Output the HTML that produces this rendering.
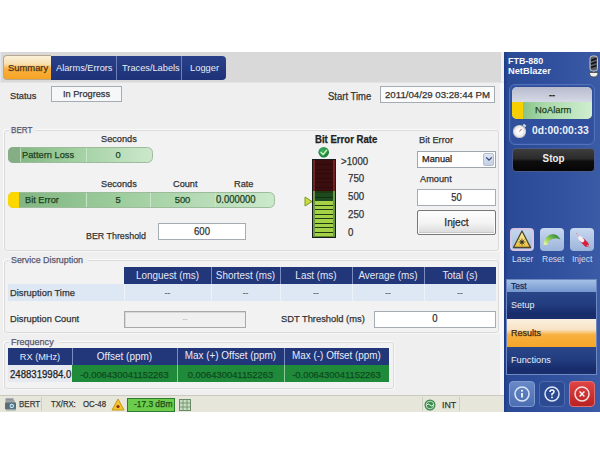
<!DOCTYPE html>
<html><head><meta charset="utf-8"><style>
html,body{margin:0;padding:0;}
body{width:600px;height:465px;position:relative;overflow:hidden;background:#fff;font-family:"Liberation Sans",sans-serif;}
.r{position:absolute;}
.t{position:absolute;white-space:nowrap;line-height:1;-webkit-text-stroke:0.25px currentColor;}
.t.l{-webkit-text-stroke:0;}
</style></head><body>
<div class="r" style="left:0px;top:52px;width:501px;height:31px;background:#d9d9d9;"></div>
<div class="r" style="left:501px;top:52px;width:3px;height:31px;background:#f0f0f0;"></div>
<div class="r" style="left:0px;top:52px;width:1px;height:31px;background:#e4e6ec;"></div>
<div class="r" style="left:0px;top:82px;width:504px;height:314px;background:#efefef;"></div>
<div class="r" style="left:0px;top:82px;width:504px;height:1px;background:#e4e4e4;"></div>
<div class="r" style="left:500px;top:83px;width:4px;height:313px;background:#f8f8f8;"></div>
<div class="r" style="left:0px;top:395px;width:504px;height:17px;background:#e7e6da;border-top:1px solid #c9c9c0;box-sizing:border-box;"></div>
<div class="r" style="left:3px;top:55px;width:48px;height:25px;background:linear-gradient(#fbf0d8 0%,#f8e0b0 35%,#f8b040 55%,#f6a421 100%);border:1px solid #b8a890;border-right:none;border-radius:4px 0 0 4px;box-sizing:border-box;"></div>
<div class="r" style="left:51px;top:56px;width:175px;height:24px;background:linear-gradient(#2a4088,#1d3278);border-radius:0 4px 4px 0;"></div>
<div class="r" style="left:116px;top:56px;width:1px;height:24px;background:#6c80b8;"></div>
<div class="r" style="left:181px;top:56px;width:1px;height:24px;background:#6c80b8;"></div>
<div class="t" style="left:8.00px;top:63.17px;font-size:9.964px;color:#4a3418;transform:scaleX(0.9434);transform-origin:0 0;">Summary</div>
<div class="t l" style="left:56.00px;top:62.60px;font-size:9.805px;color:#e8ecf6;transform:scaleX(0.9434);transform-origin:0 0;">Alarms/Errors</div>
<div class="t l" style="left:121.50px;top:62.60px;font-size:9.805px;color:#e8ecf6;transform:scaleX(0.9434);transform-origin:0 0;">Traces/Labels</div>
<div class="t l" style="left:190.00px;top:63.21px;font-size:9.911px;color:#e8ecf6;transform:scaleX(0.9434);transform-origin:0 0;">Logger</div>
<div class="t" style="left:9.50px;top:91.36px;font-size:9.858px;color:#333;transform:scaleX(0.9434);transform-origin:0 0;">Status</div>
<div class="r" style="left:51px;top:86px;width:71px;height:16px;background:#f6f7f9;border:1px solid #a6acb4;box-sizing:border-box;"></div>
<div class="t" style="left:51.00px;top:89.04px;font-size:9.752px;color:#333;width:75.26px;text-align:center;transform:scaleX(0.9434);transform-origin:0 0;">In Progress</div>
<div class="t" style="left:327.60px;top:91.98px;font-size:10.070px;color:#333;transform:scaleX(0.9434);transform-origin:0 0;">Start Time</div>
<div class="r" style="left:380px;top:86px;width:115px;height:17px;background:#fbfbfb;border:1px solid #a6acb4;box-sizing:border-box;"></div>
<div class="t" style="left:384.80px;top:89.96px;font-size:9.858px;color:#333;transform:scaleX(0.9811);transform-origin:0 0;">2011/04/29 03:28:44 PM</div>
<div class="r" style="left:4px;top:130px;width:495px;height:121px;border:1px solid #dadada;border-radius:3px;box-sizing:border-box;background:#f2f2f2;box-shadow:-1px -1px 0 #fbfbfb, 1px 1px 0 #f8f8f8;"></div>
<div class="r" style="left:9px;top:128px;width:27px;height:5px;background:#efefef;"></div>
<div class="r" style="left:4px;top:260px;width:495px;height:73px;border:1px solid #dadada;border-radius:3px;box-sizing:border-box;background:#f2f2f2;box-shadow:-1px -1px 0 #fbfbfb, 1px 1px 0 #f8f8f8;"></div>
<div class="r" style="left:9px;top:258px;width:79px;height:5px;background:#efefef;"></div>
<div class="r" style="left:4px;top:342px;width:390px;height:47px;border:1px solid #dadada;border-radius:3px;box-sizing:border-box;background:#f2f2f2;box-shadow:-1px -1px 0 #fbfbfb, 1px 1px 0 #f8f8f8;"></div>
<div class="r" style="left:9px;top:340px;width:50px;height:5px;background:#efefef;"></div>
<div class="t" style="left:11.00px;top:124.96px;font-size:9.858px;color:#56566e;transform:scaleX(0.8208);transform-origin:0 0;">BERT</div>
<div class="t" style="left:11.00px;top:255.36px;font-size:9.858px;color:#56566e;transform:scaleX(0.9019);transform-origin:0 0;">Service Disruption</div>
<div class="t" style="left:11.00px;top:336.56px;font-size:9.858px;color:#56566e;transform:scaleX(0.9170);transform-origin:0 0;">Frequency</div>
<div class="r" style="left:8px;top:147px;width:145px;height:16px;background:linear-gradient(90deg,#7fb37f 0%,#9ccc9c 40%,#cce8cc 100%);border:1px solid #9cbc9c;border-radius:5px 5.5px 5.5px 5px;box-sizing:border-box;overflow:hidden;"></div>
<div class="r" style="left:8px;top:147px;width:12px;height:16px;background:#86ae86;border-radius:5px 0 0 5px;"></div>
<div class="r" style="left:20px;top:148px;width:1px;height:14px;background:#b8d8b8;"></div>
<div class="r" style="left:86px;top:148px;width:1px;height:14px;background:#c8e6c8;"></div>
<div class="t" style="left:21.50px;top:149.56px;font-size:9.858px;color:#1c421c;transform:scaleX(0.9434);transform-origin:0 0;">Pattern Loss</div>
<div class="t" style="left:86.00px;top:150.07px;font-size:9.964px;color:#1c421c;width:67.84px;text-align:center;transform:scaleX(0.9434);transform-origin:0 0;">0</div>
<div class="t" style="left:101.00px;top:134.04px;font-size:9.752px;color:#333;transform:scaleX(0.9434);transform-origin:0 0;">Seconds</div>
<div class="r" style="left:8px;top:192px;width:267px;height:16px;background:linear-gradient(90deg,#7fb37f 0%,#9ccc9c 40%,#cce8cc 100%);border:1px solid #9cbc9c;border-radius:5px 5.5px 5.5px 5px;box-sizing:border-box;overflow:hidden;"></div>
<div class="r" style="left:8px;top:192px;width:11px;height:16px;background:#fcd800;border-radius:5px 0 0 5px;"></div>
<div class="r" style="left:86px;top:193px;width:1px;height:14px;background:#c8e6c8;"></div>
<div class="r" style="left:150px;top:193px;width:1px;height:14px;background:#c8e6c8;"></div>
<div class="r" style="left:215px;top:193px;width:1px;height:14px;background:#c8e6c8;"></div>
<div class="t" style="left:25.00px;top:194.70px;font-size:9.805px;color:#1c421c;transform:scaleX(0.9434);transform-origin:0 0;">Bit Error</div>
<div class="t" style="left:86.00px;top:194.97px;font-size:9.964px;color:#1c421c;width:67.84px;text-align:center;transform:scaleX(0.9434);transform-origin:0 0;">5</div>
<div class="t" style="left:150.00px;top:194.97px;font-size:9.964px;color:#1c421c;width:68.90px;text-align:center;transform:scaleX(0.9434);transform-origin:0 0;">500</div>
<div class="t" style="left:216.20px;top:194.88px;font-size:10.070px;color:#1c421c;transform:scaleX(0.9434);transform-origin:0 0;">0.000000</div>
<div class="t" style="left:101.00px;top:179.04px;font-size:9.752px;color:#333;transform:scaleX(0.9434);transform-origin:0 0;">Seconds</div>
<div class="t" style="left:173.20px;top:179.04px;font-size:9.752px;color:#333;transform:scaleX(0.9434);transform-origin:0 0;">Count</div>
<div class="t" style="left:234.30px;top:179.04px;font-size:9.752px;color:#333;transform:scaleX(0.9434);transform-origin:0 0;">Rate</div>
<div class="t" style="left:85.80px;top:230.86px;font-size:9.858px;color:#333;transform:scaleX(0.9009);transform-origin:0 0;">BER Threshold</div>
<div class="r" style="left:158px;top:223px;width:88px;height:17px;background:#fff;border:1px solid #a6acb4;box-sizing:border-box;"></div>
<div class="t" style="left:158.00px;top:226.89px;font-size:10.176px;color:#333;width:93.28px;text-align:center;transform:scaleX(0.9434);transform-origin:0 0;">600</div>
<div class="t" style="left:315.00px;top:135.39px;font-size:10.176px;color:#222;font-weight:bold;transform:scaleX(0.9434);transform-origin:0 0;">Bit Error Rate</div>
<svg class="r" style="left:317px;top:146px" width="14" height="13" viewBox="0 0 14 13"><defs><radialGradient id="cg" cx="0.4" cy="0.35" r="0.7"><stop offset="0" stop-color="#3cb060"/><stop offset="1" stop-color="#1a7a38"/></radialGradient></defs><circle cx="6.7" cy="6.2" r="5.3" fill="url(#cg)"/><path d="M4 6.4 L6.1 8.6 L9.6 4.2" fill="none" stroke="#c8f4b8" stroke-width="1.5" stroke-linecap="round" stroke-linejoin="round"/></svg>
<div class="r" style="left:312px;top:159px;width:24px;height:79px;background:#2a1010;border:1px solid #1a1a1a;box-sizing:border-box;"></div>
<div class="r" style="left:313px;top:160px;width:22px;height:31px;background:#3a0e0e;border-left:2px solid #742222;border-right:2px solid #742222;box-sizing:border-box;"></div>
<div class="r" style="left:313px;top:191px;width:22px;height:46px;background:#1e3a10;border-left:2px solid #6a9a48;border-right:2px solid #6a9a48;border-bottom:1px solid #5a8a30;box-sizing:border-box;"></div>
<div class="r" style="left:315px;top:164.0px;width:18px;height:0.6px;background:#300a0a;"></div>
<div class="r" style="left:315px;top:168.5px;width:18px;height:0.6px;background:#300a0a;"></div>
<div class="r" style="left:315px;top:173.0px;width:18px;height:0.6px;background:#300a0a;"></div>
<div class="r" style="left:315px;top:177.5px;width:18px;height:0.6px;background:#300a0a;"></div>
<div class="r" style="left:315px;top:182.0px;width:18px;height:0.6px;background:#300a0a;"></div>
<div class="r" style="left:315px;top:186.5px;width:18px;height:0.6px;background:#300a0a;"></div>
<div class="r" style="left:315px;top:193px;width:18px;height:8px;background:#1c4a1c;"></div>
<div class="r" style="left:315px;top:197px;width:18px;height:0.8px;background:#123012;"></div>
<div class="r" style="left:315px;top:201.4px;width:18px;height:3.5px;background:#a6d046;"></div>
<div class="r" style="left:315px;top:205.9px;width:18px;height:3.5px;background:#a6d046;"></div>
<div class="r" style="left:315px;top:210.4px;width:18px;height:3.5px;background:#a6d046;"></div>
<div class="r" style="left:315px;top:214.9px;width:18px;height:3.5px;background:#a6d046;"></div>
<div class="r" style="left:315px;top:219.4px;width:18px;height:3.5px;background:#a6d046;"></div>
<div class="r" style="left:315px;top:223.9px;width:18px;height:3.5px;background:#a6d046;"></div>
<div class="r" style="left:315px;top:228.4px;width:18px;height:3.5px;background:#a6d046;"></div>
<div class="r" style="left:315px;top:232.9px;width:18px;height:3.5px;background:#a6d046;"></div>
<svg class="r" style="left:304px;top:196px" width="9" height="11" viewBox="0 0 9 11"><path d="M1 1 L8 5.5 L1 10 Z" fill="#c8dc40" stroke="#7a9a20" stroke-width="1"/></svg>
<div class="t" style="left:341.00px;top:156.50px;font-size:10.282px;color:#333;transform:scaleX(0.9434);transform-origin:0 0;">&gt;1000</div>
<div class="t" style="left:347.80px;top:174.30px;font-size:10.282px;color:#333;transform:scaleX(0.9434);transform-origin:0 0;">750</div>
<div class="t" style="left:347.80px;top:192.30px;font-size:10.282px;color:#333;transform:scaleX(0.9434);transform-origin:0 0;">500</div>
<div class="t" style="left:347.80px;top:210.20px;font-size:10.282px;color:#333;transform:scaleX(0.9434);transform-origin:0 0;">250</div>
<div class="t" style="left:347.80px;top:228.00px;font-size:10.282px;color:#333;transform:scaleX(0.9434);transform-origin:0 0;">0</div>
<div class="t" style="left:419.40px;top:134.56px;font-size:9.858px;color:#333;transform:scaleX(0.9434);transform-origin:0 0;">Bit Error</div>
<div class="r" style="left:417px;top:151px;width:79px;height:17px;background:#fff;border:1px solid #a0a6b0;box-sizing:border-box;"></div>
<div class="r" style="left:483px;top:153px;width:11px;height:13px;background:linear-gradient(#dfe6f2,#c4d0e6);border:1px solid #b4bed2;border-radius:2px;box-sizing:border-box;"></div>
<svg class="r" style="left:485px;top:156px" width="8" height="6" viewBox="0 0 8 6"><path d="M1.2 1.4 L4 4.2 L6.8 1.4" fill="none" stroke="#34487e" stroke-width="1.3"/></svg>
<div class="t" style="left:421.60px;top:154.14px;font-size:9.752px;color:#222;transform:scaleX(0.9434);transform-origin:0 0;">Manual</div>
<div class="t" style="left:419.50px;top:173.74px;font-size:9.752px;color:#333;transform:scaleX(0.9434);transform-origin:0 0;">Amount</div>
<div class="r" style="left:417px;top:189px;width:79px;height:17px;background:#fff;border:1px solid #a6acb4;box-sizing:border-box;"></div>
<div class="t" style="left:417.00px;top:193.38px;font-size:10.070px;color:#333;width:83.74px;text-align:center;transform:scaleX(0.9434);transform-origin:0 0;">50</div>
<div class="r" style="left:417px;top:210px;width:79px;height:25px;background:linear-gradient(#fdfdfd 0%,#f4f4f4 50%,#d8d8d8 100%);border:1px solid #787878;border-radius:2px;box-sizing:border-box;box-shadow:inset 0 0 0 1px #fafafa, inset 0 -1px 0 1px #c8c8c8;"></div>
<div class="t" style="left:417.00px;top:216.95px;font-size:10.812px;color:#2a2a2a;width:83.74px;text-align:center;transform:scaleX(0.9434);transform-origin:0 0;">Inject</div>
<div class="r" style="left:124px;top:267px;width:372px;height:17px;background:#22367a;"></div>
<div class="r" style="left:211px;top:267px;width:1px;height:17px;background:#7a8cc0;"></div>
<div class="r" style="left:280px;top:267px;width:1px;height:17px;background:#7a8cc0;"></div>
<div class="r" style="left:352px;top:267px;width:1px;height:17px;background:#7a8cc0;"></div>
<div class="r" style="left:424px;top:267px;width:1px;height:17px;background:#7a8cc0;"></div>
<div class="r" style="left:8px;top:284px;width:488px;height:17px;background:#dde8f4;"></div>
<div class="r" style="left:124px;top:284px;width:1px;height:17px;background:#eef3fa;"></div>
<div class="r" style="left:211px;top:284px;width:1px;height:17px;background:#eef3fa;"></div>
<div class="r" style="left:280px;top:284px;width:1px;height:17px;background:#eef3fa;"></div>
<div class="r" style="left:352px;top:284px;width:1px;height:17px;background:#eef3fa;"></div>
<div class="r" style="left:424px;top:284px;width:1px;height:17px;background:#eef3fa;"></div>
<div class="t l" style="left:124.00px;top:271.42px;font-size:10.494px;color:#e4e8f4;width:92.22px;text-align:center;transform:scaleX(0.9434);transform-origin:0 0;">Longuest (ms)</div>
<div class="t" style="left:124.00px;top:288.52px;font-size:8.480px;color:#666;width:92.22px;text-align:center;transform:scaleX(0.9434);transform-origin:0 0;">--</div>
<div class="t l" style="left:211.00px;top:271.42px;font-size:10.494px;color:#e4e8f4;width:73.14px;text-align:center;transform:scaleX(0.9434);transform-origin:0 0;">Shortest (ms)</div>
<div class="t" style="left:211.00px;top:288.52px;font-size:8.480px;color:#666;width:73.14px;text-align:center;transform:scaleX(0.9434);transform-origin:0 0;">--</div>
<div class="t l" style="left:280.00px;top:271.42px;font-size:10.494px;color:#e4e8f4;width:76.32px;text-align:center;transform:scaleX(0.9434);transform-origin:0 0;">Last (ms)</div>
<div class="t" style="left:280.00px;top:288.52px;font-size:8.480px;color:#666;width:76.32px;text-align:center;transform:scaleX(0.9434);transform-origin:0 0;">--</div>
<div class="t l" style="left:352.00px;top:271.42px;font-size:10.494px;color:#e4e8f4;width:76.32px;text-align:center;transform:scaleX(0.9434);transform-origin:0 0;">Average (ms)</div>
<div class="t" style="left:352.00px;top:288.52px;font-size:8.480px;color:#666;width:76.32px;text-align:center;transform:scaleX(0.9434);transform-origin:0 0;">--</div>
<div class="t l" style="left:424.00px;top:271.42px;font-size:10.494px;color:#e4e8f4;width:76.32px;text-align:center;transform:scaleX(0.9434);transform-origin:0 0;">Total (s)</div>
<div class="t" style="left:424.00px;top:288.52px;font-size:8.480px;color:#666;width:76.32px;text-align:center;transform:scaleX(0.9434);transform-origin:0 0;">--</div>
<div class="t" style="left:9.60px;top:288.21px;font-size:9.911px;color:#333;transform:scaleX(0.9434);transform-origin:0 0;">Disruption Time</div>
<div class="t" style="left:9.60px;top:314.16px;font-size:9.858px;color:#333;transform:scaleX(0.9434);transform-origin:0 0;">Disruption Count</div>
<div class="r" style="left:124px;top:311px;width:122px;height:17px;background:#f0f0f0;border:1px solid #a8a8a8;box-sizing:border-box;box-shadow:inset 1px 1px 0 #d8d8d8;"></div>
<div class="t l" style="left:124.00px;top:314.57px;font-size:7.950px;color:#aaa;width:129.32px;text-align:center;transform:scaleX(0.9434);transform-origin:0 0;">--</div>
<div class="t" style="left:281.30px;top:314.11px;font-size:9.911px;color:#333;transform:scaleX(0.9434);transform-origin:0 0;">SDT Threshold (ms)</div>
<div class="r" style="left:374px;top:311px;width:122px;height:17px;background:#fff;border:1px solid #a6acb4;box-sizing:border-box;"></div>
<div class="t" style="left:374.00px;top:313.98px;font-size:10.070px;color:#333;width:129.32px;text-align:center;transform:scaleX(0.9434);transform-origin:0 0;">0</div>
<div class="r" style="left:8px;top:348px;width:381px;height:17px;background:#22367a;"></div>
<div class="r" style="left:72px;top:348px;width:1px;height:17px;background:#7a8cc0;"></div>
<div class="r" style="left:177px;top:348px;width:1px;height:17px;background:#7a8cc0;"></div>
<div class="r" style="left:284px;top:348px;width:1px;height:17px;background:#7a8cc0;"></div>
<div class="r" style="left:8px;top:365px;width:64px;height:17px;background:#e6eaf0;"></div>
<div class="r" style="left:72px;top:365px;width:317px;height:17px;background:#1f8a3a;"></div>
<div class="r" style="left:177px;top:365px;width:1px;height:17px;background:#8cc89c;"></div>
<div class="r" style="left:284px;top:365px;width:1px;height:17px;background:#8cc89c;"></div>
<div class="t l" style="left:8.00px;top:351.74px;font-size:9.752px;color:#e8ecf6;width:67.84px;text-align:center;transform:scaleX(0.9434);transform-origin:0 0;">RX (MHz)</div>
<div class="t l" style="left:72.00px;top:351.03px;font-size:10.600px;color:#e8ecf6;width:111.30px;text-align:center;transform:scaleX(0.9434);transform-origin:0 0;">Offset (ppm)</div>
<div class="t l" style="left:177.00px;top:351.12px;font-size:10.494px;color:#e8ecf6;width:113.42px;text-align:center;transform:scaleX(0.9434);transform-origin:0 0;">Max (+) Offset (ppm)</div>
<div class="t l" style="left:284.00px;top:351.12px;font-size:10.494px;color:#e8ecf6;width:111.30px;text-align:center;transform:scaleX(0.9434);transform-origin:0 0;">Max (-) Offset (ppm)</div>
<div class="t" style="left:10.20px;top:369.69px;font-size:10.176px;color:#222;transform:scaleX(0.9434);transform-origin:0 0;">2488319984.0</div>
<div class="t" style="left:72.00px;top:369.87px;font-size:9.964px;color:#0e4a1e;width:111.30px;text-align:center;transform:scaleX(0.9434);transform-origin:0 0;">-0.006430041152263</div>
<div class="t" style="left:177.00px;top:369.87px;font-size:9.964px;color:#0e4a1e;width:113.42px;text-align:center;transform:scaleX(0.9434);transform-origin:0 0;">0.006430041152263</div>
<div class="t" style="left:284.00px;top:369.87px;font-size:9.964px;color:#0e4a1e;width:111.30px;text-align:center;transform:scaleX(0.9434);transform-origin:0 0;">-0.006430041152263</div>
<svg class="r" style="left:4px;top:398px" width="14" height="13" viewBox="0 0 14 13"><rect x="1.5" y="0.5" width="8" height="1.2" fill="#6a7480"/><rect x="1.5" y="2.4" width="9" height="1.2" fill="#6a7480"/><rect x="1" y="4.2" width="11" height="7.3" rx="1" fill="#5e6c78"/><circle cx="7.8" cy="7.9" r="2.7" fill="#d8ecf4" stroke="#3a5a6a" stroke-width="0.8"/><circle cx="7.8" cy="7.9" r="1.2" fill="#4a90b0"/><rect x="2" y="11.5" width="10" height="1" fill="#8fa8a0"/></svg>
<div class="t" style="left:18.80px;top:398.96px;font-size:9.858px;color:#3a3a3a;transform:scaleX(0.8113);transform-origin:0 0;">BERT</div>
<div class="r" style="left:41px;top:397px;width:1px;height:14px;background:#cfcec2;"></div>
<div class="t" style="left:50.60px;top:398.96px;font-size:9.858px;color:#333;transform:scaleX(0.7783);transform-origin:0 0;">TX/RX:</div>
<div class="t" style="left:83.40px;top:398.96px;font-size:9.858px;color:#333;transform:scaleX(0.7925);transform-origin:0 0;">OC-48</div>
<svg class="r" style="left:111px;top:398px" width="14" height="13" viewBox="0 0 14 13"><path d="M7 1 L13 12 L1 12 Z" fill="#f4c430" stroke="#c89a10" stroke-width="1"/><circle cx="7" cy="8.5" r="1.6" fill="#8a2a10"/></svg>
<div class="r" style="left:127px;top:398px;width:48px;height:14px;background:#6ccc4c;border:1px solid #2e7a2e;box-sizing:border-box;"></div>
<div class="t" style="left:134.20px;top:399.36px;font-size:9.858px;color:#1a4a1a;transform:scaleX(0.8491);transform-origin:0 0;">-17.3 dBm</div>
<svg class="r" style="left:179px;top:399px" width="12" height="12" viewBox="0 0 12 12"><rect x="0.5" y="0.5" width="11" height="11" fill="#c8dcc0" stroke="#6a8a6a"/><path d="M4 0.5V11.5M8 0.5V11.5M0.5 4H11.5M0.5 8H11.5" stroke="#6a8a6a" stroke-width="0.8"/></svg>
<div class="r" style="left:422px;top:397px;width:1px;height:14px;background:#cfcec2;"></div>
<div class="r" style="left:459px;top:397px;width:1px;height:14px;background:#cfcec2;"></div>
<svg class="r" style="left:424px;top:399px" width="12" height="12" viewBox="0 0 12 12"><circle cx="6" cy="6" r="5.5" fill="#3a8a4a"/><circle cx="6" cy="6" r="3.8" fill="none" stroke="#cfe8d0" stroke-width="0.9"/><path d="M2.5 6.5 Q4 3.5 6 6 T9.5 5.5" fill="none" stroke="#fff" stroke-width="0.9"/></svg>
<div class="t" style="left:442.00px;top:399.56px;font-size:9.858px;color:#333;transform:scaleX(0.8962);transform-origin:0 0;">INT</div>
<div class="r" style="left:504px;top:52px;width:96px;height:360px;background:linear-gradient(90deg,#1d3a86 0%,#2a4a96 4%,#3252a0 60%,#3b5ba6 100%);"></div>
<div class="t l" style="left:507.50px;top:56.47px;font-size:9.487px;color:#f4f6fa;font-weight:bold;transform:scaleX(0.9434);transform-origin:0 0;">FTB-880</div>
<div class="t l" style="left:507.50px;top:65.66px;font-size:9.858px;color:#f4f6fa;font-weight:bold;transform:scaleX(0.9434);transform-origin:0 0;">NetBlazer</div>
<svg class="r" style="left:588px;top:55px" width="11" height="23" viewBox="0 0 11 23"><rect x="2" y="1" width="7.5" height="15" rx="2.5" fill="#5a5e66" stroke="#c4c8d0" stroke-width="1"/><path d="M3 5.5 L8.5 3.5 M3 9 L8.5 7 M3 12.5 L8.5 10.5" stroke="#111" stroke-width="1.6"/><path d="M3.5 16.5 L5.5 18 M8 16.5 L6 18" stroke="#333" stroke-width="0.8"/><path d="M1.5 17.5 H10 Q10 22 5.75 22 Q1.5 22 1.5 17.5 Z" fill="#eef0ec" stroke="#444" stroke-width="0.8"/></svg>
<div class="r" style="left:509px;top:84px;width:86px;height:61px;background:#30509e;border:1px solid #5272bc;border-radius:6px;box-sizing:border-box;box-shadow:inset 0 0 2px #4466b0;"></div>
<div class="r" style="left:512px;top:87px;width:80px;height:32px;border-radius:5px;overflow:hidden;background:#ccc;"></div>
<div class="r" style="left:512px;top:87px;width:80px;height:15px;background:linear-gradient(#b6bacc,#d6dae6);border-radius:5px 5px 0 0;"></div>
<div class="r" style="left:512px;top:102px;width:80px;height:17px;background:linear-gradient(90deg,#78b878 0%,#a8d8a8 40%,#d0eed0 100%);border-radius:0 0 5px 5px;"></div>
<div class="r" style="left:512px;top:102px;width:11px;height:17px;background:#f8d000;border-radius:0 0 0 5px;"></div>
<div class="t" style="left:512.00px;top:89.62px;font-size:9.540px;color:#2a2a2a;font-weight:bold;width:84.80px;text-align:center;transform:scaleX(0.9434);transform-origin:0 0;">--</div>
<div class="t" style="left:534.50px;top:105.11px;font-size:9.911px;color:#1c421c;transform:scaleX(0.9434);transform-origin:0 0;">NoAlarm</div>
<svg class="r" style="left:512px;top:123px" width="16" height="16" viewBox="0 0 16 16"><circle cx="7.5" cy="8.5" r="6" fill="#f2f2f2" stroke="#c8c8c8" stroke-width="1.2"/><circle cx="7.5" cy="8.5" r="4" fill="#fff" stroke="#ddd" stroke-width="0.6"/><path d="M7.5 8.5 L9.5 6" stroke="#c04040" stroke-width="0.9"/><rect x="11" y="1.5" width="3" height="2" fill="#ddd" transform="rotate(40 12.5 2.5)"/></svg>
<div class="t l" style="left:531.50px;top:125.46px;font-size:10.918px;color:#eef2fa;font-weight:bold;transform:scaleX(0.9434);transform-origin:0 0;">0d:00:00:33</div>
<div class="r" style="left:512px;top:148px;width:83px;height:24px;background:linear-gradient(#3e3e3e 0%,#2a2a2a 45%,#0e0e0e 55%,#050505 100%);border:1px solid #4a5a8a;border-radius:4px;box-sizing:border-box;"></div>
<div class="t l" style="left:511.50px;top:154.21px;font-size:10.388px;color:#f0f0f0;font-weight:bold;width:87.98px;text-align:center;transform:scaleX(0.9434);transform-origin:0 0;">Stop</div>
<div class="r" style="left:510px;top:228px;width:24px;height:23px;background:linear-gradient(#c4d6ee,#a8bedc);border:2px solid #d6c6e6;border-radius:4px;box-sizing:border-box;"></div>
<div class="r" style="left:540px;top:228px;width:24px;height:23px;background:linear-gradient(#c8d8f0,#9cb4da);border-radius:4px;"></div>
<div class="r" style="left:570px;top:228px;width:24px;height:23px;background:linear-gradient(#c8d8f0,#9cb4da);border-radius:4px;"></div>
<svg class="r" style="left:510px;top:228px" width="24" height="24" viewBox="0 0 24 24"><defs><linearGradient id="ly" x1="0" y1="0" x2="0" y2="1"><stop offset="0" stop-color="#faf2b8"/><stop offset="0.6" stop-color="#f4d860"/><stop offset="1" stop-color="#eeb838"/></linearGradient></defs><path d="M12 3 L20.5 19.5 L3.5 19.5 Z" fill="url(#ly)" stroke="#4a4630" stroke-width="1.3" stroke-linejoin="round"/><circle cx="12" cy="14" r="1.6" fill="#222"/><path d="M12 10.5V17.5M8.5 14H15.5M9.6 11.6L14.4 16.4M14.4 11.6L9.6 16.4" stroke="#333" stroke-width="0.7"/></svg>
<svg class="r" style="left:540px;top:228px" width="24" height="24" viewBox="0 0 24 24"><defs><linearGradient id="lg" x1="0.1" y1="0.9" x2="0.9" y2="0.2"><stop offset="0" stop-color="#e0f49c"/><stop offset="0.45" stop-color="#8cc850"/><stop offset="1" stop-color="#2e8a3c"/></linearGradient></defs><path d="M3.5 16.8 C3.8 10, 8.5 5.8, 13.5 6.2 C17 6.5, 19.2 8.8, 20.5 11.6 C18.5 10.6, 15.5 9.8, 12.5 11 C9.5 12.2, 7.8 14.2, 7.2 17 Z" fill="url(#lg)"/></svg>
<svg class="r" style="left:570px;top:228px" width="24" height="24" viewBox="0 0 24 24"><path d="M5 4 L10.5 9.5" stroke="#d8c8d8" stroke-width="2" stroke-dasharray="1.6 1"/><path d="M6 5 L9.5 8.5" stroke="#a06070" stroke-width="0.7" stroke-dasharray="1 1.5"/><path d="M12.5 12.5 L16.5 16.5" stroke="#d42040" stroke-width="4.6" stroke-linecap="round"/><path d="M10 10 L12.3 12.3" stroke="#f4eef4" stroke-width="4" stroke-linecap="round"/><path d="M17 17 L19.5 19.5" stroke="#b890a8" stroke-width="1.2"/></svg>
<div class="t l" style="left:512.20px;top:254.57px;font-size:9.010px;color:#d4dcea;transform:scaleX(0.9434);transform-origin:0 0;">Laser</div>
<div class="t l" style="left:541.50px;top:254.57px;font-size:9.010px;color:#d4dcea;transform:scaleX(0.9434);transform-origin:0 0;">Reset</div>
<div class="t l" style="left:571.70px;top:254.57px;font-size:9.010px;color:#d4dcea;transform:scaleX(0.9434);transform-origin:0 0;">Inject</div>
<div class="r" style="left:506px;top:279px;width:91px;height:96px;border:1px solid #7088c0;box-sizing:border-box;background:#1e3676;"></div>
<div class="r" style="left:507px;top:280px;width:89px;height:12px;background:linear-gradient(#a4c0e6,#7498ce);"></div>
<div class="t" style="left:511.00px;top:281.67px;font-size:9.010px;color:#1a2a5a;transform:scaleX(0.9434);transform-origin:0 0;">Test</div>
<div class="r" style="left:507px;top:292px;width:89px;height:27px;background:linear-gradient(#2a4688 0%,#223e80 45%,#182c6c 80%,#1a2e6e 100%);"></div>
<div class="t l" style="left:511.00px;top:300.17px;font-size:9.487px;color:#e8ecf6;transform:scaleX(0.9434);transform-origin:0 0;">Setup</div>
<div class="r" style="left:507px;top:319px;width:89px;height:28px;background:linear-gradient(#fbf0e0 0%,#f8e2c4 38%,#f8b040 56%,#f6a628 100%);"></div>
<div class="t" style="left:511.00px;top:328.22px;font-size:9.540px;color:#3e2a0e;transform:scaleX(0.9434);transform-origin:0 0;">Results</div>
<div class="r" style="left:507px;top:347px;width:89px;height:27px;background:linear-gradient(#2a4688 0%,#223e80 45%,#182c6c 80%,#1a2e6e 100%);"></div>
<div class="t l" style="left:511.00px;top:355.34px;font-size:9.752px;color:#e8ecf6;transform:scaleX(0.9434);transform-origin:0 0;">Functions</div>
<div class="r" style="left:509px;top:381px;width:26px;height:26px;background:linear-gradient(#6888c6,#4c6eb2);border:1px solid #7e9ad0;border-radius:4px;box-sizing:border-box;"></div>
<div class="r" style="left:539px;top:381px;width:26px;height:26px;background:#2c4a92;border:1px solid #4c6aac;border-radius:4px;box-sizing:border-box;"></div>
<div class="r" style="left:569px;top:381px;width:26px;height:26px;background:linear-gradient(#e04444,#b82222);border:1px solid #e07070;border-radius:4px;box-sizing:border-box;"></div>
<svg class="r" style="left:509px;top:381px" width="26" height="26" viewBox="0 0 26 26"><circle cx="13" cy="13" r="7" fill="none" stroke="#dce8f8" stroke-width="1.5"/><circle cx="13" cy="9.8" r="1" fill="#fff"/><path d="M13 12V16.5" stroke="#fff" stroke-width="1.7"/></svg>
<svg class="r" style="left:539px;top:381px" width="26" height="26" viewBox="0 0 26 26"><circle cx="13" cy="13" r="7" fill="none" stroke="#dce8f8" stroke-width="1.5"/><path d="M11 11 Q11 9 13 9 Q15 9 15 10.8 Q15 12 13 13 V14.4" fill="none" stroke="#fff" stroke-width="1.5"/><circle cx="13" cy="16.4" r="0.9" fill="#fff"/></svg>
<svg class="r" style="left:569px;top:381px" width="26" height="26" viewBox="0 0 26 26"><circle cx="13" cy="13" r="7" fill="none" stroke="#f8e0e0" stroke-width="1.5"/><path d="M10.6 10.6 L15.4 15.4 M15.4 10.6 L10.6 15.4" stroke="#fff" stroke-width="1.4"/></svg>
</body></html>
